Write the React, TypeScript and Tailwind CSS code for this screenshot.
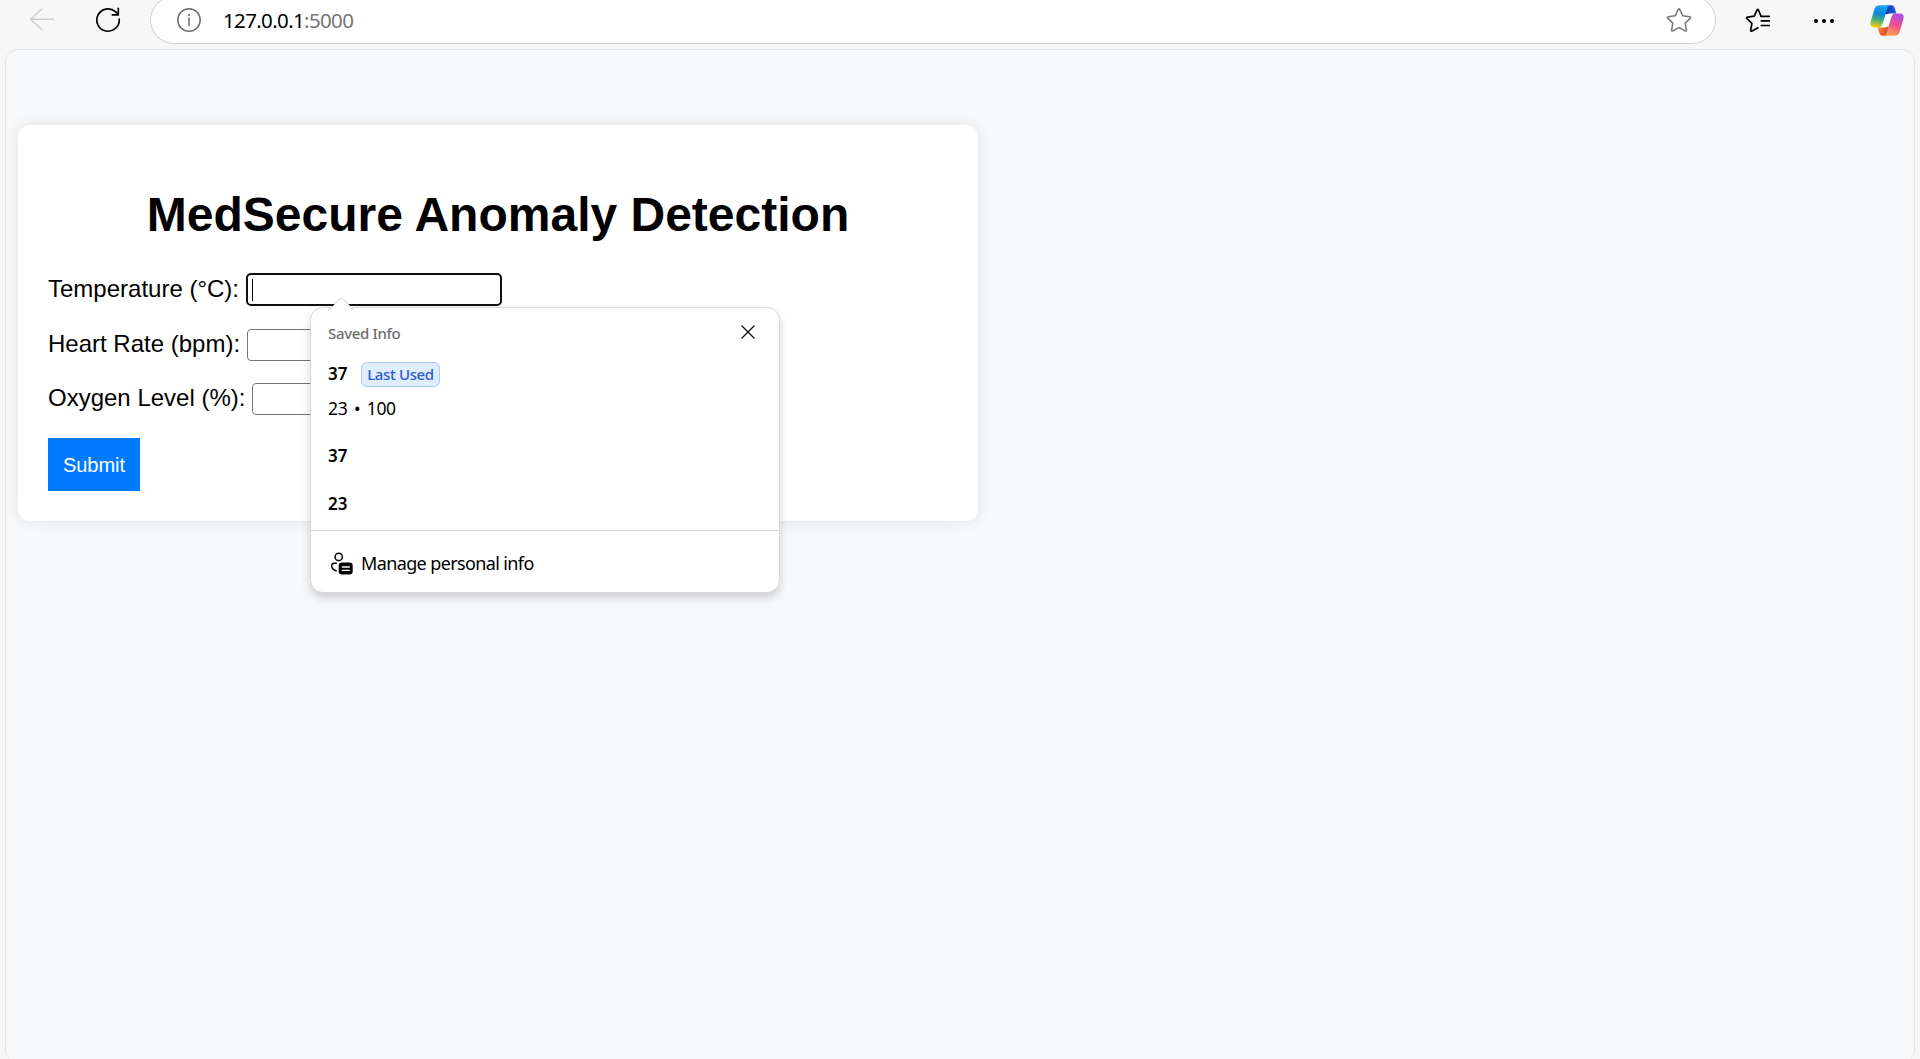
import React from "react";

function BackIcon() {
  return (
    <svg width="26" height="24" viewBox="0 0 26 24" fill="none" stroke="#cdcdcd" strokeWidth="1.5" strokeLinecap="round" strokeLinejoin="round">
      <path d="M24.6 12.2H1.4M12.8 2 1.4 12.2l11.4 10.2" />
    </svg>
  );
}

function ReloadIcon() {
  return (
    <svg width="26" height="26" viewBox="0 0 26 26" fill="none" stroke="#000" strokeWidth="1.7" strokeLinecap="round">
      <path d="M24.2 12.2A11.2 11.2 0 1 1 20.4 4.6L23.2 7.4" />
      <path d="M23.3 1.4v6.4h-6" strokeLinejoin="round" />
    </svg>
  );
}

function InfoIcon() {
  return (
    <svg width="24" height="24" viewBox="0 0 24 24" fill="none">
      <circle cx="12" cy="12" r="11.2" stroke="#6b6b6b" strokeWidth="1.5" />
      <path d="M12 10v7.4" stroke="#6b6b6b" strokeWidth="1.5" strokeLinecap="round" />
      <circle cx="12" cy="7" r="1.1" fill="#6b6b6b" />
    </svg>
  );
}

function StarIcon() {
  return (
    <svg width="26" height="26" viewBox="0 0 26 26" fill="none" stroke="#7a7a7a" strokeWidth="1.6" strokeLinejoin="round">
      <path d="M12.2 2.5q.8-1.500 1.600 0l3 6.300 6.900 1q1.600.3.5 1.500l-5 4.800 1.200 6.800q.2 1.600-1.300 1L13 20.600 6.900 23.900q-1.500.6-1.300-1l1.200-6.800-5-4.800q-1.100-1.200.5-1.500l6.900-1z" />
    </svg>
  );
}

function FavoritesIcon() {
  return (
    <svg width="26" height="26" viewBox="0 0 26 26" fill="none" stroke="#000" strokeWidth="1.7" strokeLinejoin="round" strokeLinecap="round">
      <path d="M16.300 9.300h8M16.300 13.900h8M16.300 18.500h8" />
      <path d="M16 9.300 13.600 3.300q-.9-1.700-1.700 0L9.200 9.100l-6.700 1q-1.700.4-.5 1.500l4.900 4.700-1.200 6.700q-.1 1.600 1.300 1l6-3.200" />
    </svg>
  );
}

function CopilotIcon() {
  return (
    <svg width="34" height="31" viewBox="0 0 34 31">
      <defs>
        <linearGradient id="blueGreen" x1="0.55" y1="0" x2="0.35" y2="1">
          <stop offset="0" stopColor="#1ba4ee" />
          <stop offset="0.38" stopColor="#0f86dc" />
          <stop offset="0.65" stopColor="#3fae80" />
          <stop offset="1" stopColor="#f4cf0b" />
        </linearGradient>
        <linearGradient id="deepBlue" x1="0" y1="0.4" x2="1" y2="0.4">
          <stop offset="0" stopColor="#1230a8" />
          <stop offset="1" stopColor="#1a62df" />
        </linearGradient>
        <linearGradient id="pinkViolet" x1="0.75" y1="0" x2="0.4" y2="1">
          <stop offset="0" stopColor="#a64de8" />
          <stop offset="0.5" stopColor="#ee5090" />
          <stop offset="1" stopColor="#ffa24f" />
        </linearGradient>
        <linearGradient id="orangeRed" x1="0" y1="0" x2="1" y2="0.5">
          <stop offset="0" stopColor="#f9922f" />
          <stop offset="1" stopColor="#d93c35" />
        </linearGradient>
      </defs>
      <path d="M17 .3h4.300c2.200 0 3 1.600 3.600 3.500l1.500 4.700h-5.300c-2 0-3.200.3-4.100 1.100L14 8z" fill="url(#deepBlue)" />
      <path d="M17 30.700h-4.300c-2.200 0-3-1.600-3.600-3.500l-1.500-4.700h5.300c2 0 3.200-.3 4.100-1.100L20 23z" fill="url(#orangeRed)" />
      <path d="M9.800.3h11c-2.200.2-3 1.600-3.600 3.500l-4.500 14.700c-.8 2.500-2 4-4.400 4H4c-3.200 0-4.200-2.500-3.400-5.500L4.400 4.300C5.200 1.700 7 .3 9.800.3z" fill="url(#blueGreen)" />
      <path d="M24.200 30.700h-11c2.200-.2 3-1.600 3.600-3.500l4.500-14.700c.8-2.500 2-4 4.400-4H30c3.200 0 4.200 2.500 3.400 5.500l-3.800 12.700c-.8 2.600-2.600 4-5.400 4z" fill="url(#pinkViolet)" />
      <path d="M23.600 8.900c-1.600.6-2.300 2-2.900 3.600l-1.900 6.100c-.7 2.300-1.700 3.200-3.600 3.500l-4.700.1c1.500-.7 2.100-2.100 2.600-3.700l1.900-6.100c.8-2.600 2.200-3.500 4.300-3.600z" fill="#fcfbfc" />
    </svg>
  );
}

function PersonCardIcon() {
  return (
    <svg width="23" height="23" viewBox="0 0 23 23" fill="none">
      <circle cx="8.700" cy="4.900" r="3.600" stroke="#000" strokeWidth="1.500" />
      <path d="M6.800 11.200H4.200c-1.600 0-2.500 1-2.500 2.400 0 3 1.700 4.700 5 5.400" stroke="#000" strokeWidth="1.500" />
      <rect x="8.700" y="10.500" width="14" height="12" rx="3.200" fill="#000" />
      <path d="M12.300 15h7M12.300 18.400h7" stroke="#fff" strokeWidth="1.400" strokeLinecap="round" />
    </svg>
  );
}

function Toolbar() {
  return (
    <div className="h-[49px] overflow-hidden">
      <div className="-mt-1 flex h-12 items-center">
        <div className="ml-[29px] -mt-0.5"><BackIcon /></div>
        <div className="ml-10"><ReloadIcon /></div>
        <div className="ml-[29px] flex h-12 w-[1566px] items-center rounded-full border-[1.5px] border-[#cfcfcf] bg-white pl-[26px] pr-[23px]">
          <InfoIcon />
          <span className="ml-[22px] flex-1 font-['Noto_Sans',sans-serif] text-[20.500px] tracking-[-0.640px] text-black">
            127.0.0.1<span className="text-[#767676]">:5000</span>
          </span>
          <StarIcon />
        </div>
        <div className="ml-[29px]"><FavoritesIcon /></div>
        <div className="ml-[43px] flex gap-1 pt-px">
          <i className="size-1 rounded-full bg-black" />
          <i className="size-1 rounded-full bg-black" />
          <i className="size-1 rounded-full bg-black" />
        </div>
        <div className="ml-[36px]"><CopilotIcon /></div>
      </div>
    </div>
  );
}

function SavedInfoPopup() {
  return (
    <div className="absolute left-[292px] top-[182px] z-10 h-[286px] w-[470px] rounded-[13px] border border-[#d9d9d9] bg-white font-['Noto_Sans',sans-serif] text-black shadow-[0_5px_10px_rgba(0,0,0,0.17)]">
      <svg className="absolute left-[17px] top-[-11px]" width="30" height="15" viewBox="0 0 30 15">
        <path d="M0 14.500 11.800 2.200q1.700-1.800 3.400 0L27 14.500z" fill="#fff" />
        <path d="M0.500 13.800 11.800 2.200q1.700-1.800 3.400 0L26.500 13.800" fill="none" stroke="#d0d0d0" />
      </svg>
      <div className="flex h-[48px] items-center justify-between pl-[17px] pr-[24px]">
        <span className="mt-0.5 text-[15px] font-medium leading-6 tracking-[-0.350px] text-[#6e6e6e]">Saved Info</span>
        <svg width="14" height="14" viewBox="0 0 14 14" stroke="#111" strokeWidth="1.300">
          <path d="M.5.5l13 13M13.500.5l-13 13" />
        </svg>
      </div>
      <div className="mt-px flex h-[34px] items-center pl-[17px]">
        <span className="w-[33px] text-[17px] font-semibold">37</span>
        <span className="flex h-[25px] w-[79px] items-center justify-center rounded-md border border-[#a9c9fb] bg-[#e0edff] pt-px text-[15px] font-medium tracking-[-0.350px] text-[#2b5bd0]">Last Used</span>
      </div>
      <div className="flex h-[34px] items-center pl-[17px] text-[17.500px] tracking-[-0.300px]">23<span className="mx-[6.500px]">•</span>100</div>
      <div className="mt-[7px] flex h-[48px] items-center pl-[17px] text-[17px] font-semibold">37</div>
      <div className="flex h-[51px] items-start border-b border-[#d6d6d6] pl-[17px] pt-[12px] text-[17px] font-semibold leading-6">23</div>
      <div className="flex h-[62px] items-center pl-[19px] pt-[3px]">
        <PersonCardIcon />
        <span className="ml-[8px] text-[18px] tracking-[-0.620px]">Manage personal info</span>
      </div>
    </div>
  );
}

function Field({ label, focused }: { label: string; focused?: boolean }) {
  return (
    <label className="flex h-[54.500px] items-start text-[24px] leading-[31px]">
      <span className="mr-[7px]">{label}</span>
      <span
        className={
          focused
            ? "flex h-[33px] w-[256px] items-center rounded-[5px] border-[2.500px] border-[#101010] bg-white pl-1"
            : "mt-px h-[32px] w-[253px] rounded-[4px] border border-[#767676] bg-white"
        }
      >
        {focused && <i className="h-[22px] w-px bg-black" />}
      </span>
    </label>
  );
}

export default function App() {
  return (
    <div className="h-[1059px] w-[1920px] overflow-hidden bg-[#f7f7f7] font-['Liberation_Sans',Arial,sans-serif] text-black">
      <Toolbar />
      <main className="ml-[5px] h-[1014px] w-[1910px] rounded-[13px] border border-[#e4e5e7] bg-[#f8f9fb] pl-[12px] pt-[75px]">
        <section className="relative h-[396px] w-[960px] rounded-[12px] bg-white px-[30px] pt-[62px] shadow-[0_0_15px_rgba(0,0,0,0.1)]">
          <h1 className="text-center text-[48px] font-bold leading-[55px]">MedSecure Anomaly Detection</h1>
          <div className="mt-[31px]">
            <Field label="Temperature (°C):" focused />
            <Field label="Heart Rate (bpm):" />
            <Field label="Oxygen Level (%):" />
          </div>
          <button className="mt-[1.500px] flex h-[53px] w-[92px] items-center justify-center bg-[#007bff] text-[20px] text-white">Submit</button>
          <SavedInfoPopup />
        </section>
      </main>
    </div>
  );
}
